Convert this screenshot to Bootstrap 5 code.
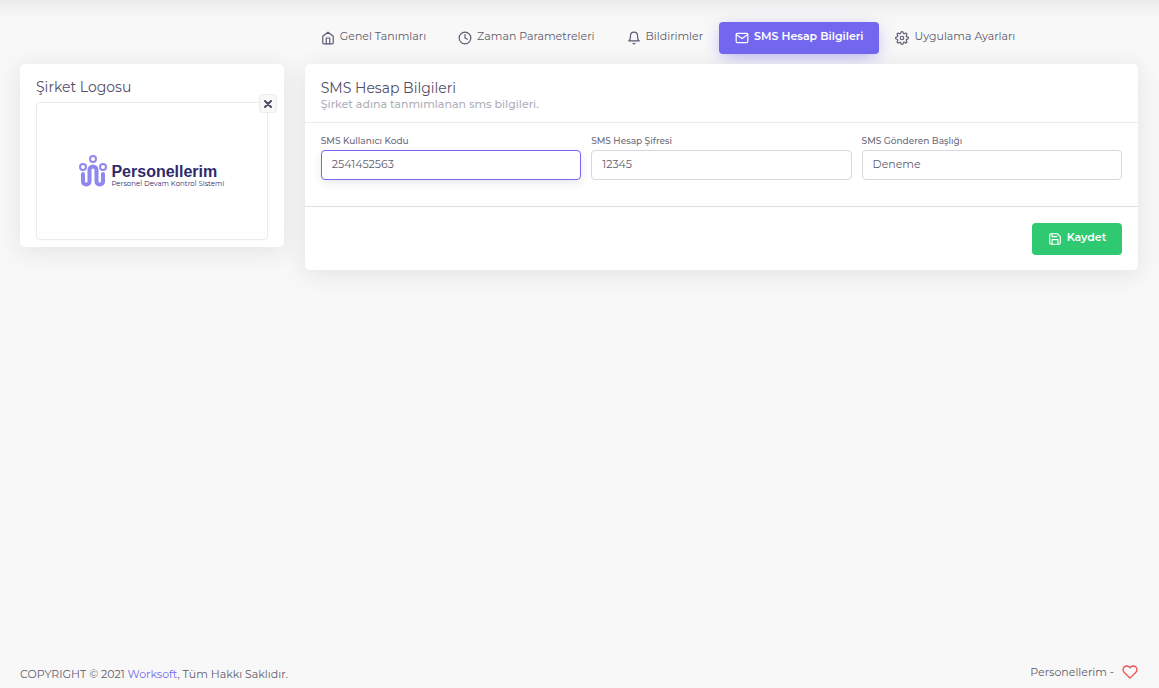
<!DOCTYPE html>
<html lang="tr">
<head>
<meta charset="utf-8">
<meta name="viewport" content="width=device-width, initial-scale=1">
<title>SMS Hesap Bilgileri</title>
<link href="https://cdn.jsdelivr.net/npm/bootstrap@5.3.0/dist/css/bootstrap.min.css" rel="stylesheet">
<style>
  :root { --ink: #5f5c6b; --heading: #5e5873; --accent: #7367f0; --line: #ebe9f1; }
  body { font-family: Montserrat, Inter, sans-serif; font-size: 11px; line-height: 16px; font-weight: 400; color: var(--ink); background: #f8f8f8; }
  .page-shade { background: #f8f8f8 linear-gradient(#e9ebea, #f1f2f1 8px, #f6f6f6 15px, #f8f8f8 24px) no-repeat top / 100% 24px; }
  .page-main { padding: 22px 21px 0 20px; }
  .page-main > .row { --bs-gutter-x: 21px; }
  svg { fill: none; stroke: currentColor; stroke-width: 2; stroke-linecap: round; stroke-linejoin: round; flex: none; }
  .tabs-bar { margin-bottom: 10px; }
  .tabs-bar .nav-link { display: flex; align-items: center; gap: 5px; height: 32px; padding: 0 16px; color: var(--ink); border-radius: 4px; }
  .tabs-bar .nav-link svg { color: var(--heading); }
  .tabs-bar .nav-link span { padding-bottom: 4px; }
  .tabs-bar .nav-link.active { background: var(--accent); color: #fff; font-weight: 600; box-shadow: 0 4px 18px -4px rgba(115,103,240,.65); }
  .tabs-bar .nav-link.active svg { color: #fff; }
  .card { --bs-card-border-width: 0; --bs-card-border-radius: 5px; box-shadow: 0 4px 24px rgba(34,41,47,.1); color: var(--ink); }
  .logo-card { margin-top: 42px; padding: 14px 16px 7px; }
  .card-heading { font-size: 14px; line-height: 18px; font-weight: 400; color: #534d68; margin: 0; }
  .logo-frame { position: relative; height: 138px; margin-top: 6px; border: 1px solid var(--line); border-radius: 4px; }
  .remove-btn { position: absolute; top: -9px; right: -10px; width: 18px; height: 19px; padding: 0; display: flex; align-items: center; justify-content: center; border: 1px solid var(--line); border-radius: 4px; background: #f8f8f8; color: #4b4b5f; }
  .brand-name { font-family: "Liberation Sans", sans-serif; font-size: 16px; line-height: 16px; font-weight: 700; color: #2f2b6b; }
  .brand-note { font-size: 7px; line-height: 7px; color: #2f2b6b; }
  .sms-card .card-header { background: none; padding: 15px 16px 10px; border-bottom: 1px solid var(--line); }
  .sms-card .card-body { padding: 12px 16px 26px; }
  .sms-card .card-footer { background: none; padding: 16px 16px 15px; border-top: 1px solid #dae1e7; }
  .card-note { font-weight: 500; color: #b0b0ba; line-height: 15px; margin: 0; }
  .field-row { --bs-gutter-x: 10px; }
  .form-label { display: block; font-size: 9px; line-height: 12px; font-weight: 500; margin: 0 0 3px; color: #6e6b7b; }
  .form-control { height: 30px; padding: 0 10px 2px; font-size: 11px; font-weight: 400; color: var(--ink); border-color: #d8d6de; border-radius: 4px; }
  .form-control:focus { color: var(--ink); border-color: var(--accent); box-shadow: 0 3px 10px rgba(34,41,47,.1); caret-color: transparent; }
  .save-btn { display: flex; align-items: center; justify-content: center; gap: 5px; width: 90px; height: 32px; padding: 0; font-size: 11px; font-weight: 600; color: #fff; background: #2fc971; border: 0; border-radius: 4px; }
  .save-btn span { padding-bottom: 3px; }
  .page-footer { padding: 0 21px 6px 20px; }
  .page-footer a { color: var(--accent); text-decoration: none; }
  .made-by { gap: 8px; padding-bottom: 2px; }
</style>
</head>
<body class="page-shade min-vh-100 d-flex flex-column">
<main class="page-main container-fluid flex-grow-1">
  <div class="row">
    <div class="col-3">
      <section class="card logo-card">
        <h1 class="card-heading">Şirket Logosu</h1>
        <div class="logo-frame d-flex align-items-center justify-content-center">
          <button type="button" class="remove-btn" aria-label="Logoyu kaldır">
            <svg width="8" height="8" viewBox="0 0 8 8" stroke-linecap="butt"><path d="M1 1l6 6M7 1L1 7"/></svg>
          </button>
          <div class="d-flex align-items-end">
            <svg width="28" height="32" viewBox="0 0 28 32" color="#8f88ee" class="me-1">
              <circle cx="14" cy="4" r="3"/><circle cx="4" cy="12" r="3"/><circle cx="24" cy="12" r="3"/>
              <path stroke-width="4" d="M4 19v7.500a3 3 0 0 0 3 3h0.500a3 3 0 0 0 3-3V15a3.500 3.500 0 0 1 7 0v11.500a3 3 0 0 0 3 3h0.500a3 3 0 0 0 3-3V19"/>
            </svg>
            <div>
              <div class="brand-name">Personellerim</div>
              <div class="brand-note">Personel Devam Kontrol Sistemi</div>
            </div>
          </div>
        </div>
      </section>
    </div>
    <div class="col-9">
      <ul class="nav nav-pills flex-nowrap text-nowrap tabs-bar">
        <li class="nav-item"><a class="nav-link" href="#genel"><svg width="14" height="14" viewBox="0 0 24 24"><path d="M3 9l9-7 9 7v11a2 2 0 0 1-2 2H5a2 2 0 0 1-2-2z"/><path d="M9 22V12h6v10"/></svg><span>Genel Tanımları</span></a></li>
        <li class="nav-item"><a class="nav-link" href="#zaman"><svg width="14" height="14" viewBox="0 0 24 24"><circle cx="12" cy="12" r="10"/><path d="M12 6v6l4 2"/></svg><span>Zaman Parametreleri</span></a></li>
        <li class="nav-item"><a class="nav-link" href="#bildirim"><svg width="14" height="14" viewBox="0 0 24 24"><path d="M18 8A6 6 0 0 0 6 8c0 7-3 9-3 9h18s-3-2-3-9"/><path d="M13.730 21a2 2 0 0 1-3.460 0"/></svg><span>Bildirimler</span></a></li>
        <li class="nav-item"><a class="nav-link active" aria-current="page" href="#sms"><svg width="14" height="14" viewBox="0 0 24 24"><path d="M4 4h16c1.100 0 2 .9 2 2v12c0 1.100-.9 2-2 2H4c-1.100 0-2-.9-2-2V6c0-1.100.9-2 2-2z"/><path d="M22 6l-10 7L2 6"/></svg><span>SMS Hesap Bilgileri</span></a></li>
        <li class="nav-item"><a class="nav-link" href="#uygulama"><svg width="14" height="14" viewBox="0 0 24 24"><circle cx="12" cy="12" r="3"/><path d="M19.400 15a1.650 1.650 0 0 0 .33 1.820l.06.06a2 2 0 0 1 0 2.830 2 2 0 0 1-2.830 0l-.06-.06a1.650 1.650 0 0 0-1.820-.33 1.650 1.650 0 0 0-1 1.510V21a2 2 0 0 1-2 2 2 2 0 0 1-2-2v-.09A1.650 1.650 0 0 0 9 19.400a1.650 1.650 0 0 0-1.820.33l-.06.06a2 2 0 0 1-2.830 0 2 2 0 0 1 0-2.830l.06-.06a1.650 1.650 0 0 0 .33-1.820 1.650 1.650 0 0 0-1.510-1H3a2 2 0 0 1-2-2 2 2 0 0 1 2-2h.09A1.650 1.650 0 0 0 4.600 9a1.650 1.650 0 0 0-.33-1.820l-.06-.06a2 2 0 0 1 0-2.830 2 2 0 0 1 2.830 0l.06.06a1.650 1.650 0 0 0 1.820.33H9a1.650 1.650 0 0 0 1-1.510V3a2 2 0 0 1 2-2 2 2 0 0 1 2 2v.09a1.650 1.650 0 0 0 1 1.510 1.650 1.650 0 0 0 1.820-.33l.06-.06a2 2 0 0 1 2.830 0 2 2 0 0 1 0 2.830l-.06.06a1.650 1.650 0 0 0-.33 1.820V9a1.650 1.650 0 0 0 1.510 1H21a2 2 0 0 1 2 2 2 2 0 0 1-2 2h-.09a1.650 1.650 0 0 0-1.510 1z"/></svg><span>Uygulama Ayarları</span></a></li>
      </ul>
      <form class="card sms-card">
        <div class="card-header">
          <h2 class="card-heading">SMS Hesap Bilgileri</h2>
          <p class="card-note">Şirket adına tanmımlanan sms bilgileri.</p>
        </div>
        <div class="card-body">
          <div class="row field-row">
            <div class="col-4"><label class="form-label" for="kod">SMS Kullanıcı Kodu</label><input class="form-control" id="kod" type="text" value="2541452563" autofocus></div>
            <div class="col-4"><label class="form-label" for="sifre">SMS Hesap Şifresi</label><input class="form-control" id="sifre" type="text" value="12345"></div>
            <div class="col-4"><label class="form-label" for="baslik">SMS Gönderen Başlığı</label><input class="form-control" id="baslik" type="text" value="Deneme"></div>
          </div>
        </div>
        <div class="card-footer d-flex justify-content-end">
          <button type="button" class="btn save-btn"><svg width="14" height="14" viewBox="0 0 24 24"><path d="M19 21H5a2 2 0 0 1-2-2V5a2 2 0 0 1 2-2h11l5 5v11a2 2 0 0 1-2 2z"/><path d="M17 21v-8H7v8M7 3v5h8"/></svg><span>Kaydet</span></button>
        </div>
      </form>
    </div>
  </div>
</main>
<footer class="page-footer d-flex justify-content-between align-items-end">
  <span>COPYRIGHT © 2021 <a href="#worksoft">Worksoft</a>, Tüm Hakkı Saklıdır.</span>
  <span class="made-by d-flex align-items-center">Personellerim - <svg width="16" height="16" viewBox="0 0 24 24" color="#ea5455"><path d="M20.840 4.610a5.500 5.500 0 0 0-7.780 0L12 5.670l-1.060-1.060a5.500 5.500 0 0 0-7.780 7.780l1.060 1.060L12 21.230l7.780-7.780 1.060-1.060a5.500 5.500 0 0 0 0-7.780z"/></svg></span>
</footer>
<script src="https://cdn.jsdelivr.net/npm/bootstrap@5.3.0/dist/js/bootstrap.bundle.min.js"></script>
</body>
</html>
